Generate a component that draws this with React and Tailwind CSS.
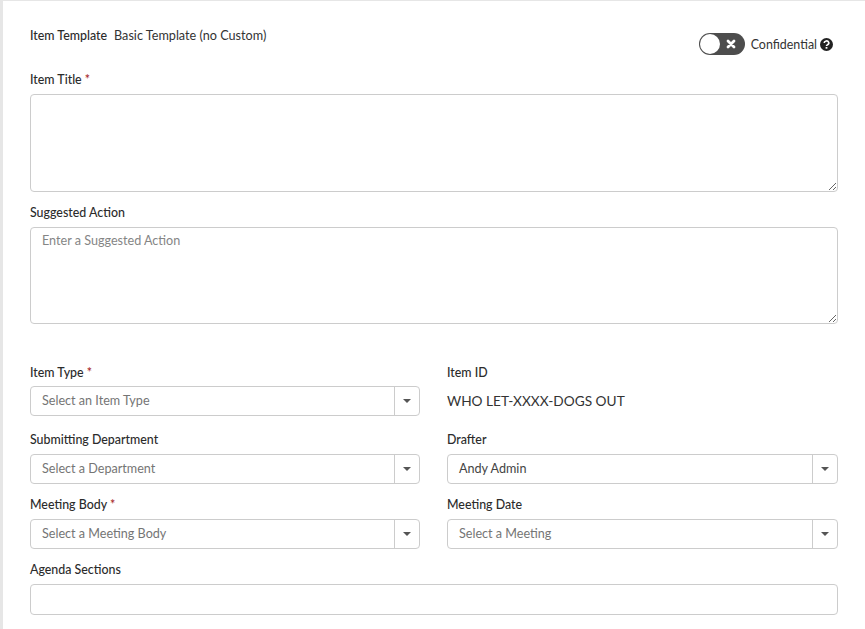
import React from "react";

const font = { fontFamily: '"Lato", "Liberation Sans", sans-serif' };

function Label({ children, required, className = "" }) {
  return (
    <div className={`h-[18px] text-[12.4px] leading-[18px] font-medium text-[#2b2b2b] ${className}`}>
      {children}
      {required && <span className="text-[#a32020]"> *</span>}
    </div>
  );
}

function Select({ value, placeholder }) {
  return (
    <div className="flex h-[30px] w-full rounded-[4px] border border-[#cccccc] bg-white">
      <div className={`flex flex-1 items-center pl-[11px] pt-px text-[12.6px] ${placeholder ? "text-[#757575]" : "text-[#444444]"}`}>
        {value}
      </div>
      <div className="flex w-[25px] items-center justify-center border-l border-[#cccccc]">
        <div className="h-0 w-0 border-x-[4px] border-t-[4px] border-x-transparent border-t-[#555555]" />
      </div>
    </div>
  );
}

export default function App() {
  return (
    <div className="h-[629px] w-[865px] overflow-hidden bg-[#e6e6e6] pl-[3px] pt-px" style={font}>
      <div className="h-full bg-white pl-[27px] pr-[27px]">
        <div className="flex h-[70px] items-start justify-between">
          <div className="mt-[26px] flex h-[18px] items-center text-[12.65px] text-[#333333]">
            <span className="text-[12.4px] font-medium text-[#2b2b2b]">Item Template</span>
            <span className="ml-[7px]">Basic Template (no Custom)</span>
          </div>
          <div className="mt-[32px] mr-[5px] flex items-center">
            <div className="flex h-[22px] w-[46px] items-center justify-between rounded-full bg-[#4d4d4d] pl-px pr-[9px]">
              <div className="h-[20px] w-[20px] rounded-full bg-white" />
              <svg width="10" height="10" viewBox="0 0 10 10" className="text-white">
                <path d="M2 2l6 6M8 2l-6 6" stroke="currentColor" strokeWidth="2.8" strokeLinecap="round" />
              </svg>
            </div>
            <span className="ml-[6px] pt-[2px] text-[12.45px] text-[#333333]">Confidential</span>
            <svg width="13" height="13" viewBox="0 0 13 13" className="ml-[3px]">
              <circle cx="6.5" cy="6.5" r="6.5" fill="#222222" />
              <path d="M4.2 5a2.3 2 0 1 1 3.4 1.7c-.8.4-1.1.7-1.1 1.4" fill="none" stroke="#fff" strokeWidth="1.6" />
              <rect x="5.6" y="9" width="1.8" height="1.7" fill="#fff" />
            </svg>
          </div>
        </div>

        <Label required>Item Title</Label>
        <textarea className="mt-[5px] block h-[98px] w-[808px] resize-y rounded-[4px] border border-[#cccccc] bg-white outline-none" />

        <Label className="mt-[12px]">Suggested Action</Label>
        <textarea
          placeholder="Enter a Suggested Action"
          className="mt-[5px] block h-[97px] w-[808px] resize-y rounded-[4px] border border-[#cccccc] bg-white px-[11px] py-[4px] text-[12.6px] outline-none placeholder:text-[#858585]"
        />

        <div className="mt-[40px] grid w-[808px] grid-cols-[390px_391px] gap-x-[27px]">
          <div>
            <Label required>Item Type</Label>
            <div className="mt-[4px]">
              <Select value="Select an Item Type" placeholder />
            </div>
          </div>
          <div>
            <Label>Item ID</Label>
            <div className="mt-[4px] flex h-[30px] items-center text-[13.7px] text-[#333333]">WHO LET-XXXX-DOGS OUT</div>
          </div>

          <div className="mt-[15px]">
            <Label>Submitting Department</Label>
            <div className="mt-[5px]">
              <Select value="Select a Department" placeholder />
            </div>
          </div>
          <div className="mt-[15px]">
            <Label>Drafter</Label>
            <div className="mt-[5px]">
              <Select value="Andy Admin" />
            </div>
          </div>

          <div className="mt-[12px]">
            <Label required>Meeting Body</Label>
            <div className="mt-[5px]">
              <Select value="Select a Meeting Body" placeholder />
            </div>
          </div>
          <div className="mt-[12px]">
            <Label>Meeting Date</Label>
            <div className="mt-[5px]">
              <Select value="Select a Meeting" placeholder />
            </div>
          </div>
        </div>

        <Label className="mt-[12px]">Agenda Sections</Label>
        <div className="mt-[5px] h-[31px] w-[808px] rounded-[4px] border border-[#cccccc] bg-white" />
      </div>
    </div>
  );
}
